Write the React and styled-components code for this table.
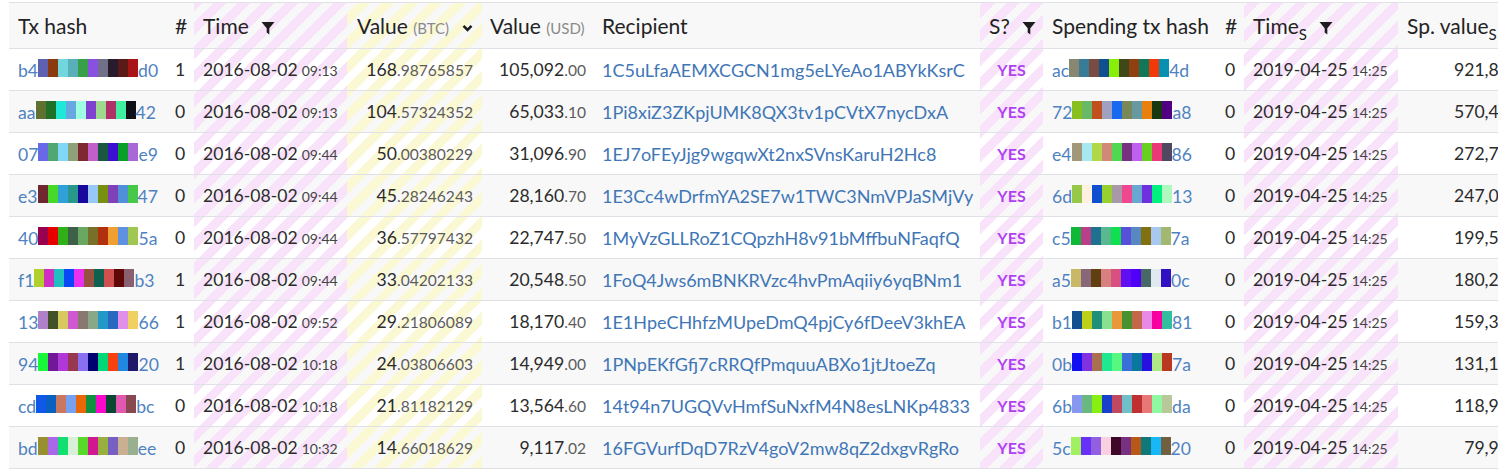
import React from "react";
import styled, { createGlobalStyle, css } from "styled-components";

const GlobalStyle = createGlobalStyle`
  body {
    margin: 0;
    background: #fff;
    font-family: Lato, "Open Sans", sans-serif;
    color: #2b2b2b;
  }
`;

const STRIPE = {
  pink: "#f9e3fa",
  yellow: "#fbf9d4",
};

// diagonal "/" stripes, fixed to the viewport so they run on across rows
const striped = css`
  ${(p) =>
    p.$stripe &&
    css`
      background-image: repeating-linear-gradient(
        135deg,
        ${STRIPE[p.$stripe]} 0 9px,
        transparent 9px 17px
      );
      background-attachment: fixed;
    `}
`;

const Wrap = styled.div`
  margin-left: 9px;
  padding-top: 2px;
  width: 1489px;
  overflow: hidden;
`;

const Table = styled.table`
  width: 1541px;
  table-layout: fixed;
  border-collapse: separate;
  border-spacing: 0;
  font-size: 17.6px;
`;

const Th = styled.th`
  height: 45px;
  padding: 0 ${(p) => p.$pad || 9}px;
  text-align: left;
  font-size: 21px;
  font-weight: 400;
  color: #232323;
  white-space: nowrap;
  vertical-align: middle;
  background-color: #f8f8f8;
  border-top: 1px solid #dfe1e7;
  border-bottom: 1px solid #dfe1e7;
  ${striped}
`;

const Row = styled.tr`
  background-color: ${(p) => (p.$alt ? "#f8f8f8" : "#fff")};
`;

const Td = styled.td`
  height: 41px;
  padding: 0 ${(p) => p.$pad || 9}px;
  text-align: ${(p) => p.$align || "left"};
  white-space: nowrap;
  vertical-align: middle;
  border-bottom: 1px solid #dfe1e7;
  ${striped}
`;

const Unit = styled.span`
  font-size: 15px;
  color: #8a8a8a;
`;

const Sub = styled.sub`
  font-size: 15px;
  vertical-align: -6px;
  line-height: 0;
`;

const IconBox = styled.span`
  display: inline-block;
  margin-left: ${(p) => p.$gap || 12}px;
  vertical-align: ${(p) => p.$va || "-1px"};
  line-height: 0;
`;

const HashLink = styled.span`
  color: #4f82c0;
`;

const Swatch = styled.span`
  display: inline-block;
  width: 10px;
  height: 18px;
  background: ${(p) => p.$c};
`;

const Small = styled.span`
  font-size: 14px;
  color: #444;
  margin-left: 4px;
`;

const Frac = styled.span`
  font-size: 15.6px;
  color: #5c5c5c;
`;

const Addr = styled.span`
  font-size: 18px;
  color: #3f76b6;
`;

const Yes = styled.span`
  color: #b041f2;
  font-weight: 700;
  font-size: 16px;
`;

function Filter() {
  return (
    <IconBox>
      <svg width="14" height="14" viewBox="0 0 14 14">
        <path d="M0.5 1 H13.5 L8.3 7.2 V13.4 L5.7 11.4 V7.2 Z" fill="#1d1d1d" />
      </svg>
    </IconBox>
  );
}

function Chevron() {
  return (
    <IconBox $gap={13} $va="2px">
      <svg width="11" height="8" viewBox="0 0 11 8">
        <polyline
          points="1.5,1.8 5.5,5.8 9.5,1.8"
          fill="none"
          stroke="#1d1d1d"
          strokeWidth="2.6"
        />
      </svg>
    </IconBox>
  );
}

function Hash({ start, end, colors }) {
  return (
    <>
      <HashLink>{start}</HashLink>
      {colors.map((c, i) => (
        <Swatch key={i} $c={c} />
      ))}
      <HashLink>{end}</HashLink>
    </>
  );
}

function Num({ value }) {
  const [int, frac] = value.split(".");
  return (
    <>
      {int}
      <Frac>.{frac}</Frac>
    </>
  );
}

const rows = [
  {
    tx: ["b4", "d0", ["#6060b0", "#8b3a10", "#70d8dc", "#5ab0b8", "#38a048", "#8a50e0", "#707088", "#281c2c", "#5a1a18", "#a81418"]],
    n: 1, time: "09:13", btc: "168.98765857", usd: "105,092.00",
    to: "1C5uLfaAEMXCGCN1mg5eLYeAo1ABYkKsrC",
    sp: ["ac", "4d", ["#888870", "#387c98", "#784c40", "#105090", "#88f008", "#404818", "#904010", "#107858", "#f03808", "#0890b0"]],
    spv: "921,846.12",
  },
  {
    tx: ["aa", "42", ["#607030", "#207028", "#20e8d8", "#68a8e0", "#a0ffe0", "#8040d0", "#a0d890", "#b03068", "#40f0a0", "#101018"]],
    n: 0, time: "09:13", btc: "104.57324352", usd: "65,033.10",
    to: "1Pi8xiZ3ZKpjUMK8QX3tv1pCVtX7nycDxA",
    sp: ["72", "a8", ["#88c020", "#68b868", "#c05020", "#a0a0c0", "#1868f0", "#788858", "#6898a0", "#e88010", "#183810", "#500080"]],
    spv: "570,473.80",
  },
  {
    tx: ["07", "e9", ["#6868e8", "#50a870", "#80d8f8", "#90a078", "#802830", "#c060c8", "#185840", "#3c10d0", "#08a028", "#a868d8"]],
    n: 0, time: "09:44", btc: "50.00380229", usd: "31,096.90",
    to: "1EJ7oFEyJjg9wgqwXt2nxSVnsKaruH2Hc8",
    sp: ["e4", "86", ["#a09878", "#a8e8f0", "#b0d848", "#d08878", "#50d850", "#783080", "#c060f0", "#68d020", "#e83878", "#504860"]],
    spv: "272,728.05",
  },
  {
    tx: ["e3", "47", ["#702830", "#48d828", "#30a0d8", "#28988a", "#18089c", "#98c8f8", "#789010", "#8040b8", "#5090d8", "#48c848"]],
    n: 0, time: "09:44", btc: "45.28246243", usd: "28,160.70",
    to: "1E3Cc4wDrfmYA2SE7w1TWC3NmVPJaSMjVy",
    sp: ["6d", "13", ["#98c848", "#fff0e0", "#1050d0", "#98d030", "#a898a8", "#f04890", "#68a8d0", "#7030e0", "#00f080", "#b0f8c0"]],
    spv: "247,012.66",
  },
  {
    tx: ["40", "5a", ["#980050", "#e80000", "#30b018", "#3c6048", "#68a860", "#787028", "#b03010", "#f0a030", "#6090e0", "#a0c850"]],
    n: 0, time: "09:44", btc: "36.57797432", usd: "22,747.50",
    to: "1MyVzGLLRoZ1CQpzhH8v91bMffbuNFaqfQ",
    sp: ["c5", "7a", ["#10b838", "#b84088", "#207090", "#58b890", "#10e050", "#5850d8", "#5888c0", "#807010", "#a8c8f0", "#a0b870"]],
    spv: "199,544.31",
  },
  {
    tx: ["f1", "b3", ["#b0d030", "#d030c0", "#20c0c0", "#0848f8", "#e830f0", "#985040", "#106050", "#d05050", "#600808", "#886070"]],
    n: 1, time: "09:44", btc: "33.04202133", usd: "20,548.50",
    to: "1FoQ4Jws6mBNKRVzc4hvPmAqiiy6yqBNm1",
    sp: ["a5", "0c", ["#c8b868", "#886878", "#604010", "#d88080", "#d85080", "#6010f0", "#5000f8", "#486868", "#e0e8f0", "#3010c0"]],
    spv: "180,291.47",
  },
  {
    tx: ["13", "66", ["#b080c8", "#405028", "#d8c860", "#d058d0", "#887870", "#88a888", "#2098c8", "#2868c0", "#e090e8", "#f0d060"]],
    n: 1, time: "09:52", btc: "29.21806089", usd: "18,170.40",
    to: "1E1HpeCHhfzMUpeDmQ4pjCy6fDeeV3khEA",
    sp: ["b1", "81", ["#105090", "#c0d018", "#209078", "#88e090", "#e89838", "#489030", "#c06848", "#e888e8", "#f800a0", "#30c0a0"]],
    spv: "159,352.18",
  },
  {
    tx: ["94", "20", ["#18f838", "#701898", "#b038d8", "#983850", "#8870f0", "#000070", "#00d878", "#f84010", "#2088e0", "#201868"]],
    n: 1, time: "10:18", btc: "24.03806603", usd: "14,949.00",
    to: "1PNpEKfGfj7cRRQfPmquuABXo1jtJtoeZq",
    sp: ["0b", "7a", ["#1010f0", "#8030e0", "#a87050", "#20e890", "#58f880", "#3870d8", "#0878a0", "#2810e0", "#b0e888", "#b83820"]],
    spv: "131,160.94",
  },
  {
    tx: ["cd", "bc", ["#1058e8", "#0860c0", "#c87860", "#78a0f0", "#e86808", "#109040", "#f808c8", "#084830", "#e058b0", "#884850"]],
    n: 0, time: "10:18", btc: "21.81182129", usd: "13,564.60",
    to: "14t94n7UGQVvHmfSuNxfM4N8esLNKp4833",
    sp: ["6b", "da", ["#8898f0", "#68b880", "#88f010", "#1840c8", "#c04860", "#70c0c8", "#c03030", "#e87878", "#90f8a0", "#b8c898"]],
    spv: "118,962.75",
  },
  {
    tx: ["bd", "ee", ["#989030", "#a868e8", "#10e070", "#d8f0d8", "#58d828", "#d01890", "#98b040", "#7860c0", "#c8b090", "#98b090"]],
    n: 0, time: "10:32", btc: "14.66018629", usd: "9,117.02",
    to: "16FGVurfDqD7RzV4goV2mw8qZ2dxgvRgRo",
    sp: ["5c", "20", ["#a0f060", "#6830f8", "#9060e0", "#f8d0e0", "#400828", "#783080", "#b85818", "#107878", "#18b8f8", "#706040"]],
    spv: "79,958.23",
  },
];

const widths = [157, 28, 153, 135, 111, 387, 63, 174, 27, 154, 152];

export default function App() {
  return (
    <Wrap>
      <GlobalStyle />
      <Table>
        <colgroup>
          {widths.map((w, i) => (
            <col key={i} style={{ width: w }} />
          ))}
        </colgroup>
        <thead>
          <tr>
            <Th>Tx hash</Th>
            <Th>#</Th>
            <Th $stripe="pink">
              Time
              <Filter />
            </Th>
            <Th $stripe="yellow" $pad={10}>
              Value <Unit>(BTC)</Unit>
              <Chevron />
            </Th>
            <Th $pad={8}>
              Value <Unit>(USD)</Unit>
            </Th>
            <Th>Recipient</Th>
            <Th $stripe="pink">
              S?
              <Filter />
            </Th>
            <Th>Spending tx hash</Th>
            <Th $pad={8}>#</Th>
            <Th $stripe="pink">
              Time<Sub>S</Sub>
              <Filter />
            </Th>
            <Th>
              Sp. value<Sub>S</Sub>
            </Th>
          </tr>
        </thead>
        <tbody>
          {rows.map((r, i) => (
            <Row key={i} $alt={i % 2 === 1}>
              <Td>
                <Hash start={r.tx[0]} end={r.tx[1]} colors={r.tx[2]} />
              </Td>
              <Td>{r.n}</Td>
              <Td $stripe="pink">
                2016-08-02<Small>{r.time}</Small>
              </Td>
              <Td $stripe="yellow" $align="right">
                <Num value={r.btc} />
              </Td>
              <Td $align="right" $pad={7}>
                <Num value={r.usd} />
              </Td>
              <Td>
                <Addr>{r.to}</Addr>
              </Td>
              <Td $stripe="pink" $align="center">
                <Yes>YES</Yes>
              </Td>
              <Td>
                <Hash start={r.sp[0]} end={r.sp[1]} colors={r.sp[2]} />
              </Td>
              <Td $pad={8}>0</Td>
              <Td $stripe="pink">
                2019-04-25<Small>14:25</Small>
              </Td>
              <Td $align="right">
                <Num value={r.spv} />
              </Td>
            </Row>
          ))}
        </tbody>
      </Table>
    </Wrap>
  );
}
